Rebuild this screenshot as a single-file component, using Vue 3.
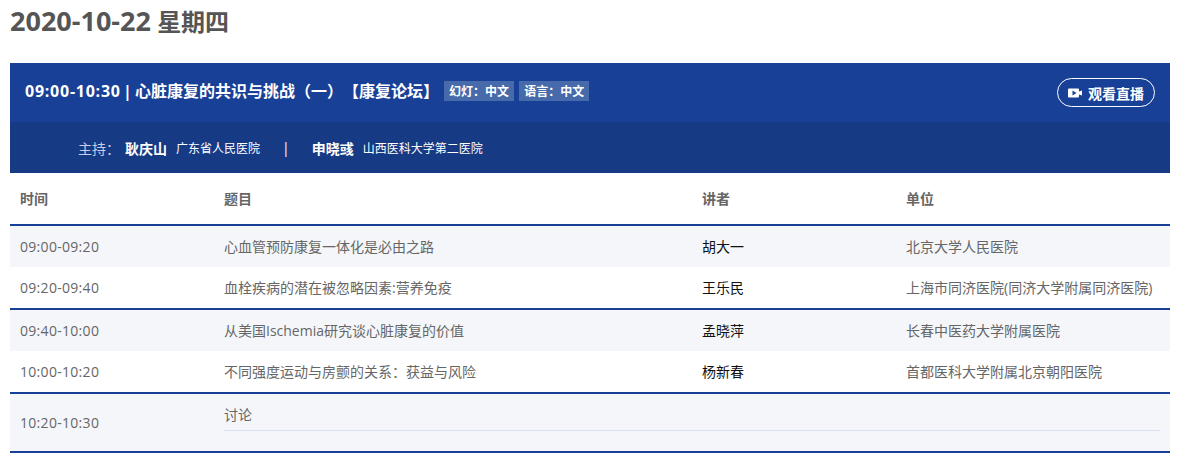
<script setup>
const groups = [
  [
    { time: '09:00-09:20', topic: '心血管预防康复一体化是必由之路', speaker: '胡大一', org: '北京大学人民医院', shade: true },
    { time: '09:20-09:40', topic: '血栓疾病的潜在被忽略因素:营养免疫', speaker: '王乐民', org: '上海市同济医院(同济大学附属同济医院)', shade: false }
  ],
  [
    { time: '09:40-10:00', topic: '从美国Ischemia研究谈心脏康复的价值', speaker: '孟晓萍', org: '长春中医药大学附属医院', shade: true },
    { time: '10:00-10:20', topic: '不同强度运动与房颤的关系：获益与风险', speaker: '杨新春', org: '首都医科大学附属北京朝阳医院', shade: false }
  ]
]
</script>

<template>
  <div class="page">
    <h2 class="date"><span class="date-num">2020-10-22</span> 星期四</h2>
    <section class="session">
      <div class="banner">
        <div class="title"><span class="title-time">09:00-10:30 | </span>心脏康复的共识与挑战（一）【康复论坛】</div>
        <span class="tag">幻灯：中文</span>
        <span class="tag">语言：中文</span>
        <a class="live">
          <svg class="live-icon" width="14" height="10" viewBox="0 0 14 10">
            <path fill="#fff" fill-rule="evenodd" d="M1 0.5H10a1 1 0 0 1 1 1V3.4L14 2.6V7.4L11 6.6V8.5a1 1 0 0 1-1 1H1a1 1 0 0 1-1-1V1.5a1 1 0 0 1 1-1ZM4.5 2.6V7.4L8.5 5Z"/>
          </svg>
          观看直播
        </a>
      </div>
      <div class="hosts">
        <span class="host-label">主持：</span>
        <b class="host-name">耿庆山</b>
        <span class="host-org">广东省人民医院</span>
        <span class="sep">|</span>
        <b class="host-name">申晓彧</b>
        <span class="host-org">山西医科大学第二医院</span>
      </div>
      <div class="row head">
        <div>时间</div><div>题目</div><div>讲者</div><div>单位</div>
      </div>
      <div v-for="(g, i) in groups" :key="i" class="group">
        <div v-for="r in g" :key="r.time" class="row" :class="{ shade: r.shade }">
          <div class="time">{{ r.time }}</div>
          <div>{{ r.topic }}</div>
          <div class="speaker">{{ r.speaker }}</div>
          <div>{{ r.org }}</div>
        </div>
      </div>
      <div class="group discussion">
        <div class="d-time time">10:20-10:30</div>
        <div class="d-topic">讨论</div>
      </div>
    </section>
  </div>
</template>

<style scoped>
.page {
  width: 1180px;
  height: 458px;
  box-sizing: border-box;
  padding: 0 10px;
  overflow: hidden;
  background: #fff;
  font-family: "Open Sans", "Noto Sans CJK SC", sans-serif;
  color: #666;
  text-spacing-trim: space-all;
}
.date {
  margin: 0;
  height: 63px;
  box-sizing: border-box;
  font-size: 24px;
  line-height: 42px;
  font-weight: 700;
  color: #555;
  white-space: nowrap;
}
.date-num {
  font-size: 27px;
}
.banner {
  height: 59px;
  background: #184097;
  display: flex;
  align-items: center;
  padding: 0 15px;
  color: #fff;
}
.title {
  font-size: 16px;
  font-weight: 700;
  line-height: 24px;
  white-space: nowrap;
  margin: 0 5px 4px 0;
}
.title-time {
  letter-spacing: 0.75px;
  word-spacing: -2.5px;
}
.tag {
  background: #466aaa;
  font-size: 12px;
  font-weight: 700;
  line-height: 21px;
  height: 20px;
  padding: 0 5px;
  margin: 0 5px 3px 0;
  white-space: nowrap;
}
.live {
  margin-left: auto;
  width: 98px;
  height: 29px;
  box-sizing: border-box;
  border: 1px solid #fff;
  border-radius: 15px;
  display: flex;
  align-items: center;
  justify-content: center;
  gap: 6px;
  font-size: 14px;
  font-weight: 700;
}
.hosts {
  height: 51px;
  background: #173a85;
  display: flex;
  align-items: center;
  padding-left: 68px;
  color: #fff;
  font-size: 12px;
  white-space: nowrap;
}
.host-label {
  font-size: 14px;
  color: #c5d0e6;
  width: 47px;
}
.host-name {
  font-size: 14px;
  font-weight: 700;
  margin-right: 9px;
}
.sep {
  font-size: 14px;
  margin: 0 22px;
}
.row {
  display: grid;
  grid-template-columns: 204px 478px 204px 274px;
  height: 41px;
  align-items: center;
  font-size: 14px;
  white-space: nowrap;
  line-height: 20px;
}
.row > div {
  padding-left: 10px;
}
.time {
  letter-spacing: 0.3px;
}
.head {
  height: 51px;
  font-weight: 700;
}
.shade {
  background: #f4f6fa;
}
.speaker {
  color: #111;
}
.group {
  border-top: 2px solid #184097;
}
.discussion {
  display: grid;
  grid-template-columns: 204px 956px;
  height: 61px;
  box-sizing: border-box;
  background: #f4f6fa;
  border-bottom: 2px solid #184097;
  font-size: 14px;
  line-height: 20px;
}
.d-time {
  padding: 19px 0 0 10px;
}
.d-topic {
  margin: 0 10px 20px 10px;
  padding-top: 11px;
  height: 37px;
  box-sizing: border-box;
  border-bottom: 1px solid #d7e1f1;
}
</style>
